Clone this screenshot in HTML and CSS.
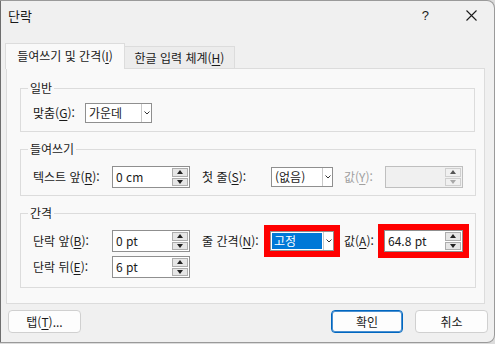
FILE: index.html
```html
<!DOCTYPE html>
<html lang="ko">
	<head>
		<meta charset="UTF-8" />
		<title>단락</title>
		<link rel="stylesheet" href="styles.css">
	</head>
	<body>
		<div class="dialog">
			<div class="titlebar">
				<span class="title">단락</span>
				<span class="help">?</span>
				<span class="close">
					<svg width="11" height="11" viewBox="0 0 11 11"><path d="M0.5 0.5 L10.5 10.5 M10.5 0.5 L0.5 10.5" stroke="#1a1a1a" stroke-width="1.1" fill="none"/></svg>
				</span>
			</div>

			<div class="tabs">
				<div class="tab active">들여쓰기 및 간격(<u>I</u>)</div>
				<div class="tab">한글 입력 체계(<u>H</u>)</div>
			</div>

			<div class="panel">
				<fieldset class="group g1">
					<legend>일반</legend>
					<div class="row">
						<span class="lbl w52">맞춤(<u>G</u>):</span>
						<div class="select w67">
							<span class="val">가운데</span>
							<span class="arrow"><svg width="6" height="4" viewBox="0 0 6 4"><path d="M0.5 0.5 L3 3 L5.5 0.5" stroke="#333" fill="none"/></svg></span>
						</div>
					</div>
				</fieldset>

				<fieldset class="group g2">
					<legend>들여쓰기</legend>
					<div class="row">
						<span class="lbl w79">텍스트 앞(<u>R</u>):</span>
						<div class="spin w78">
							<span class="val">0 cm</span>
							<div class="btns"><span class="up"></span><span class="down"></span></div>
						</div>
						<span class="lbl w69 sp12">첫 줄(<u>S</u>):</span>
						<div class="select w62">
							<span class="val">(없음)</span>
							<span class="arrow"><svg width="6" height="4" viewBox="0 0 6 4"><path d="M0.5 0.5 L3 3 L5.5 0.5" stroke="#333" fill="none"/></svg></span>
						</div>
						<span class="lbl w41 sp11 off">값(<u>Y</u>):</span>
						<div class="spin w78 disabled">
							<span class="val"></span>
							<div class="btns"><span class="up"></span><span class="down"></span></div>
						</div>
					</div>
				</fieldset>

				<fieldset class="group g3">
					<legend>간격</legend>
					<div class="row">
						<span class="lbl w79">단락 앞(<u>B</u>):</span>
						<div class="spin w78">
							<span class="val">0 pt</span>
							<div class="btns"><span class="up"></span><span class="down"></span></div>
						</div>
						<span class="lbl w68 sp12">줄 간격(<u>N</u>):</span>
						<div class="select w64 marked">
							<span class="val picked">고정</span>
							<span class="arrow"><svg width="6" height="4" viewBox="0 0 6 4"><path d="M0.5 0.5 L3 3 L5.5 0.5" stroke="#333" fill="none"/></svg></span>
						</div>
						<span class="lbl w40 sp10">값(<u>A</u>):</span>
						<div class="spin w79 marked">
							<span class="val">64.8 pt</span>
							<div class="btns"><span class="up"></span><span class="down"></span></div>
						</div>
					</div>
					<div class="row second">
						<span class="lbl w79">단락 뒤(<u>E</u>):</span>
						<div class="spin w78">
							<span class="val">6 pt</span>
							<div class="btns"><span class="up"></span><span class="down"></span></div>
						</div>
					</div>
				</fieldset>
			</div>

			<div class="footer">
				<button class="btn">탭(<u>T</u>)...</button>
				<div class="right">
					<button class="btn default">확인</button>
					<button class="btn">취소</button>
				</div>
			</div>
		</div>
	</body>
</html>
```

FILE: styles.css
```css
* {
	margin: 0;
	padding: 0;
	box-sizing: border-box;
}
body {
	width: 495px;
	height: 344px;
	overflow: hidden;
	background-color: #dcdcdc;
	font-family: "Noto Sans CJK KR", "Noto Sans", sans-serif;
	font-size: 12px;
	line-height: 16px;
	color: #1a1a1a;
}
u {
	text-decoration-thickness: 1px;
	text-underline-offset: 2px;
}
.dialog {
	width: 495px;
	height: 343px;
	background-color: #f0f0f0;
	border: 1px solid #9a9a9a;
	border-left-color: #6e6e6e;
	border-radius: 0 8px 8px 0;
	display: flex;
	flex-direction: column;
}
.titlebar {
	height: 29px;
	display: flex;
	align-items: center;

	.title {
		padding-left: 7px;
		font-size: 13px;
	}
	.help {
		margin-left: auto;
		margin-right: 37px;
		font-family: "Liberation Sans", sans-serif;
		font-size: 13px;
	}
	.close {
		display: flex;
		margin-right: 17px;
	}
}
.tabs {
	margin-top: 13px;
	padding-left: 4px;
	display: flex;
	align-items: flex-end;

	.tab {
		height: 22px;
		line-height: 21px;
		text-align: center;
		width: 110px;
		background-color: #ececec;
		border: 1px solid #dcdcdc;
		border-left: none;
		border-bottom: none;
	}
	.tab.active {
		width: 120px;
		height: 26px;
		line-height: 24px;
		margin-bottom: -1px;
		background-color: #f9f9f9;
		border-left: 1px solid #dcdcdc;
		position: relative;
		z-index: 1;
	}
}
.panel {
	margin: 0 9px 0 5px;
	background-color: #f9f9f9;
	border: 1px solid #dcdcdc;
	padding: 11px 9px 15px 13px;
}
.group {
	border: 1px solid #dcdcdc;
	padding: 6px 12px 7px;

	legend {
		margin-left: -5px;
		padding: 0 2px;
		line-height: 16px;
	}
}
.g2,
.g3 {
	margin-top: 9px;
	padding-top: 9px;
}
.g3 {
	padding-bottom: 9px;
}
.row {
	height: 22px;
	display: flex;
	align-items: center;
	white-space: nowrap;
}
.row.second {
	margin-top: 4px;
}
.lbl {
	flex: none;
}
.lbl.off {
	color: #a0a0a0;
}
.w40 { width: 40px; }
.w41 { width: 41px; }
.w52 { width: 52px; }
.w62 { width: 62px; }
.w64 { width: 64px; }
.w67 { width: 67px; }
.w68 { width: 68px; }
.w69 { width: 69px; }
.w78 { width: 78px; }
.w79 { width: 79px; }
.sp10 { margin-left: 10px; }
.sp11 { margin-left: 11px; }
.sp12 { margin-left: 12px; }

.select {
	flex: none;
	height: 20px;
	display: flex;
	background-color: #fff;
	border: 1px solid #8f8f8f;

	.val {
		flex: 1;
		padding-left: 2px;
		margin: 1px;
		line-height: 16px;
	}
	.val.picked {
		background-color: #0078d7;
		color: #fff;
	}
	.arrow {
		width: 10px;
		border-left: 1px solid #c8c8c8;
		display: flex;
		align-items: center;
		justify-content: center;
	}
}
.spin {
	flex: none;
	height: 22px;
	display: flex;
	background-color: #fff;
	border: 1px solid #8f8f8f;

	.val {
		flex: 1;
		padding-left: 3px;
		line-height: 20px;
	}
	.btns {
		width: 17px;
		display: flex;
		flex-direction: column;
		padding: 1px 1px 1px 0;
		gap: 1px;
	}
	.btns span {
		flex: 1;
		background-color: #e6e6e6;
		border: 1px solid #adadad;
		display: flex;
		align-items: center;
		justify-content: center;
	}
	.btns span::after {
		content: "";
		border-left: 3px solid transparent;
		border-right: 3px solid transparent;
	}
	.up::after {
		border-bottom: 4px solid #222;
	}
	.down::after {
		border-top: 4px solid #222;
	}
}
.spin.disabled {
	background-color: #f0f0f0;
	border-color: #bfbfbf;

	.btns span {
		background-color: #f0f0f0;
		border-color: #cfcfcf;
	}
	.up::after {
		border-bottom-color: #555;
	}
	.down::after {
		border-top-color: #a8a8a8;
	}
}
.marked {
	outline: 6px solid #f00;
}
.footer {
	margin-top: 6px;
	padding: 0 6px 0 7px;
	display: flex;
	justify-content: space-between;

	.right {
		display: flex;
		gap: 12px;
	}
	.btn {
		width: 73px;
		height: 23px;
		background-color: #fdfdfd;
		border: 1px solid #d0d0d0;
		border-radius: 4px;
		font-family: "Noto Sans CJK KR", "Noto Sans", sans-serif;
		font-size: 12px;
		line-height: 16px;
		color: #1a1a1a;
	}
	.btn.default {
		width: 72px;
		border-color: #0067c0;
		box-shadow: inset 0 0 0 1px #4a8fd0;
	}
}
```
